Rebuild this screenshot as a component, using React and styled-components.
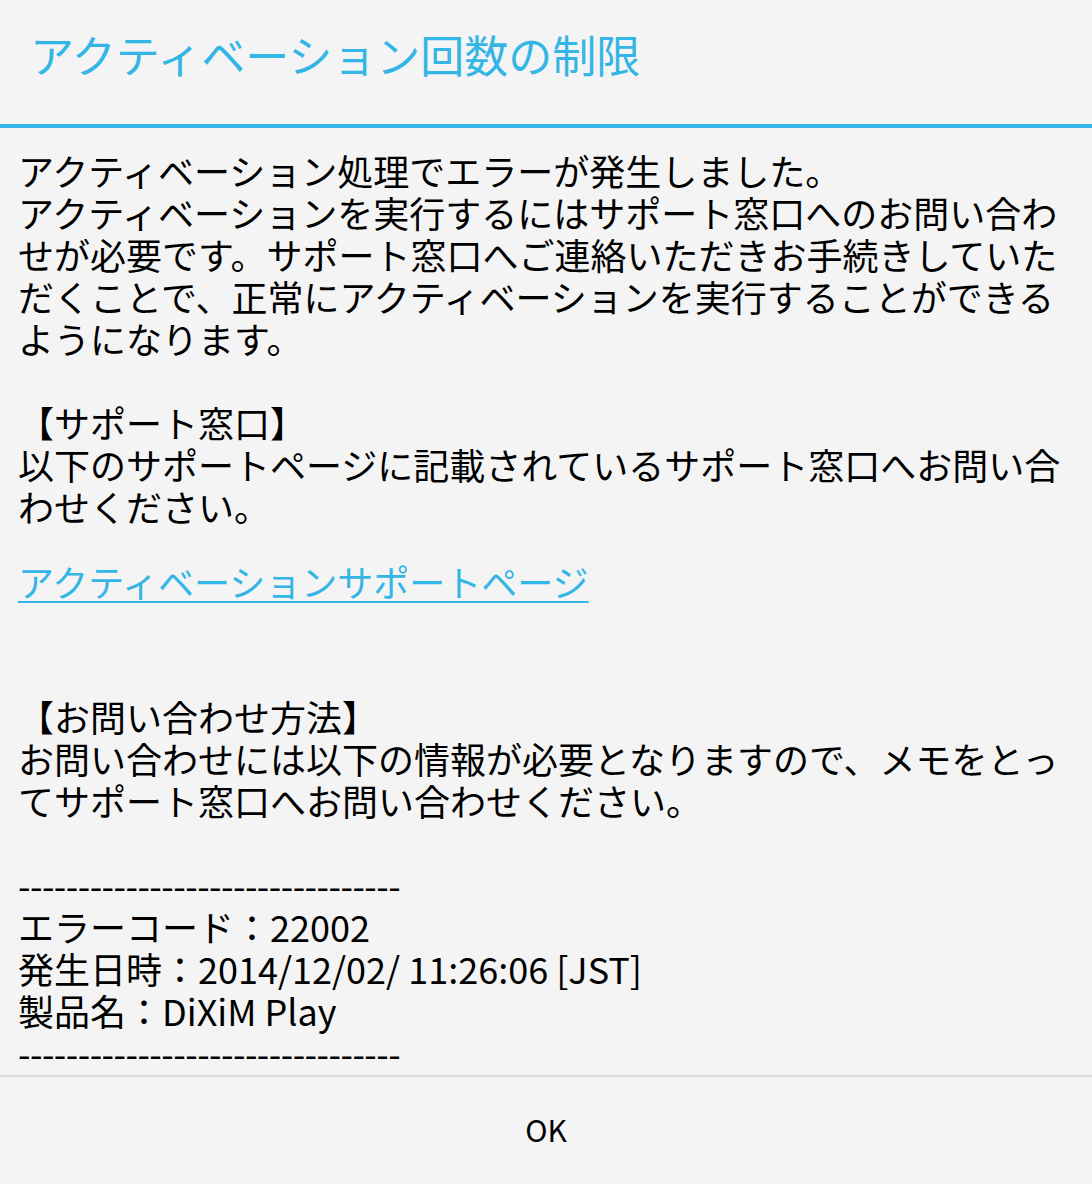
import React from "react";
import styled, { createGlobalStyle } from "styled-components";

const GlobalStyle = createGlobalStyle`
  html, body {
    margin: 0;
    padding: 0;
    background: #f4f4f4;
  }
  body {
    font-family: "Noto Sans CJK JP", "Noto Sans", sans-serif;
    color: #000;
  }
`;

const Dialog = styled.div`
  width: 1092px;
  height: 1184px;
  display: flex;
  flex-direction: column;
  background: #f4f4f4;
`;

const Header = styled.header`
  height: 128px;
  flex-shrink: 0;
  display: flex;
  align-items: center;
  padding: 0 0 17px 30px;
  box-sizing: border-box;
  border-bottom: 4px solid #33b5e5;
`;

const Title = styled.h1`
  margin: 0;
  font-size: 44px;
  font-weight: 400;
  color: #33b5e5;
`;

const Body = styled.div`
  flex: 1;
  padding: 21px 18px 0 18px;
  display: flex;
  flex-direction: column;
`;

const Message = styled.p`
  margin: 0;
  font-size: 36px;
  line-height: 42px;
  white-space: pre;
  margin-top: ${(p) => p.$top || 0}px;
`;

const Rule = styled.span`
  letter-spacing: -0.55px;
`;

const SupportLink = styled.a`
  display: block;
  margin-top: 33px;
  font-size: 36px;
  line-height: 42px;
  color: #33b5e5;
  text-decoration: underline;
  text-decoration-thickness: 2px;
  text-underline-offset: 4px;
  align-self: flex-start;
`;

const Footer = styled.div`
  height: 107px;
  flex-shrink: 0;
  border-top: 2px solid #dcdcdc;
  display: flex;
  align-items: center;
  justify-content: center;
`;

const OkButton = styled.button`
  border: none;
  background: transparent;
  font-family: "Noto Sans CJK JP", "Noto Sans", sans-serif;
  font-size: 30px;
  color: #000;
  padding: 0 40px 4px;
  cursor: pointer;
`;

const part1 = [
  "アクティベーション処理でエラーが発生しました。",
  "アクティベーションを実行するにはサポート窓口へのお問い合わ",
  "せが必要です。サポート窓口へご連絡いただきお手続きしていた",
  "だくことで、正常にアクティベーションを実行することができる",
  "ようになります。",
  "",
  "【サポート窓口】",
  "以下のサポートページに記載されているサポート窓口へお問い合",
  "わせください。",
].join("\n");

const dashes = "--------------------------------";

export default function App() {
  return (
    <>
      <GlobalStyle />
      <Dialog>
        <Header>
          <Title>アクティベーション回数の制限</Title>
        </Header>
        <Body>
          <Message>{part1}</Message>
          <SupportLink href="#">アクティベーションサポートページ</SupportLink>
          <Message $top={93}>
            {"【お問い合わせ方法】\n"}
            {"お問い合わせには以下の情報が必要となりますので、メモをとっ\n"}
            {"てサポート窓口へお問い合わせください。\n"}
            {"\n"}
            <Rule>{dashes}</Rule>
            {"\nエラーコード：22002\n"}
            {"発生日時：2014/12/02/ 11:26:06 [JST]\n"}
            {"製品名：DiXiM Play\n"}
            <Rule>{dashes}</Rule>
          </Message>
        </Body>
        <Footer>
          <OkButton>OK</OkButton>
        </Footer>
      </Dialog>
    </>
  );
}
